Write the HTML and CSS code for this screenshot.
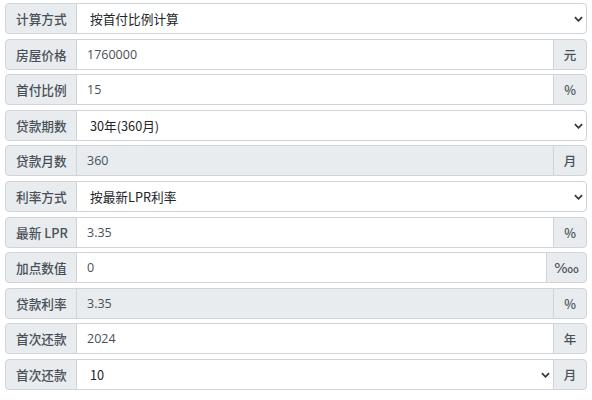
FILE: index.html
```html
<!DOCTYPE html>
<html lang="zh">
<head>
<meta charset="utf-8">
<link rel="stylesheet" href="styles.css">
</head>
<body>
<div class="form">
  <div class="group">
    <span class="label">计算方式</span>
    <div class="select-wrap">
      <select class="control select"><option>按首付比例计算</option></select>
      <svg class="chev" viewBox="0 0 10 6" width="9" height="6"><path d="M1 1l4 4 4-4" fill="none" stroke="#343a40" stroke-width="2"/></svg>
    </div>
  </div>
  <div class="group">
    <span class="label">房屋价格</span>
    <input class="control" value="1760000">
    <span class="suffix">元</span>
  </div>
  <div class="group">
    <span class="label">首付比例</span>
    <input class="control" value="15">
    <span class="suffix">%</span>
  </div>
  <div class="group">
    <span class="label">贷款期数</span>
    <div class="select-wrap">
      <select class="control select"><option>30年(360月)</option></select>
      <svg class="chev" viewBox="0 0 10 6" width="9" height="6"><path d="M1 1l4 4 4-4" fill="none" stroke="#343a40" stroke-width="2"/></svg>
    </div>
  </div>
  <div class="group">
    <span class="label">贷款月数</span>
    <input class="control readonly" value="360" readonly>
    <span class="suffix">月</span>
  </div>
  <div class="group">
    <span class="label">利率方式</span>
    <div class="select-wrap">
      <select class="control select"><option>按最新LPR利率</option></select>
      <svg class="chev" viewBox="0 0 10 6" width="9" height="6"><path d="M1 1l4 4 4-4" fill="none" stroke="#343a40" stroke-width="2"/></svg>
    </div>
  </div>
  <div class="group">
    <span class="label">最新 LPR</span>
    <input class="control" value="3.35">
    <span class="suffix">%</span>
  </div>
  <div class="group">
    <span class="label">加点数值</span>
    <input class="control" value="0">
    <span class="suffix wide">‱</span>
  </div>
  <div class="group">
    <span class="label">贷款利率</span>
    <input class="control readonly" value="3.35" readonly>
    <span class="suffix">%</span>
  </div>
  <div class="group">
    <span class="label">首次还款</span>
    <input class="control" value="2024">
    <span class="suffix">年</span>
  </div>
  <div class="group">
    <span class="label">首次还款</span>
    <div class="select-wrap">
      <select class="control select"><option>10</option></select>
      <svg class="chev" viewBox="0 0 10 6" width="9" height="6"><path d="M1 1l4 4 4-4" fill="none" stroke="#343a40" stroke-width="2"/></svg>
    </div>
    <span class="suffix">月</span>
  </div>
</div>
</body>
</html>
```
FILE: styles.css
```css
html, body {
  margin: 0;
  padding: 0;
  background: #fff;
}
body {
  font-family: "Open Sans", "Noto Sans CJK SC", sans-serif;
  font-size: 12.5px;
  color: #495057;
}
.form {
  display: flex;
  flex-direction: column;
  gap: 4.6px;
  padding: 3px 5px;
}
.group {
  display: flex;
  height: 31px;
}
.label {
  box-sizing: border-box;
  width: 72px;
  flex: none;
  display: flex;
  align-items: center;
  padding: 0 10px;
  background: #e9ecef;
  border: 1px solid #ced4da;
  border-radius: 4px 0 0 4px;
  color: #495057;
  white-space: nowrap;
  font-family: "Noto Sans CJK SC", sans-serif;
  font-size: 12.7px;
  font-weight: 500;
}
.control {
  box-sizing: border-box;
  flex: 1;
  min-width: 0;
  height: 31px;
  margin: 0 0 0 -1px;
  padding: 0 10px;
  border: 1px solid #ced4da;
  border-radius: 0;
  background: #fff;
  font: inherit;
  color: #495057;
  outline: none;
}
.group > .control:last-child {
  border-radius: 0 4px 4px 0;
}
.readonly {
  background: #e9ecef;
}
.select-wrap {
  position: relative;
  flex: 1;
  display: flex;
  min-width: 0;
}
.select-wrap:last-child .control {
  border-radius: 0 4px 4px 0;
}
.select {
  appearance: none;
  -webkit-appearance: none;
  padding-left: 13px;
  color: #212529;
  font-family: "Noto Sans CJK SC", sans-serif;
  font-size: 12.7px;
  font-weight: 400;
}
.chev {
  position: absolute;
  right: 4px;
  top: 13px;
  pointer-events: none;
}
.suffix {
  box-sizing: border-box;
  width: 34px;
  flex: none;
  margin-left: -1px;
  display: flex;
  align-items: center;
  justify-content: center;
  background: #e9ecef;
  border: 1px solid #ced4da;
  border-radius: 0 4px 4px 0;
  color: #495057;
  font-family: "Noto Sans CJK SC", sans-serif;
  font-weight: 500;
}
.suffix.wide {
  width: 41px;
  font-family: "DejaVu Sans", sans-serif;
  font-weight: 400;
  font-size: 14.5px;
}
```
